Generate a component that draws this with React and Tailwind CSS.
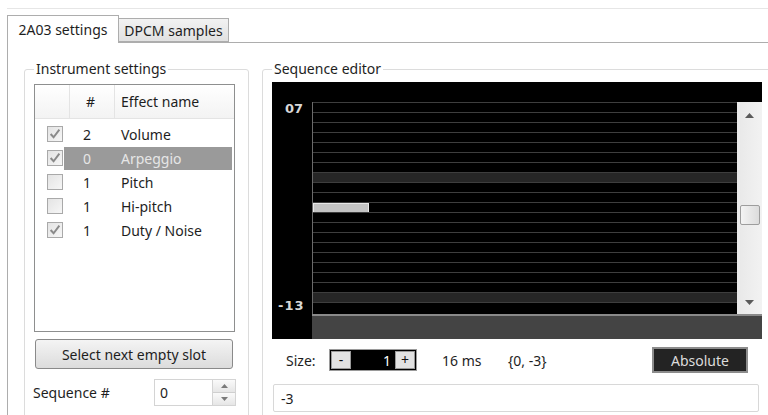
import React from 'react';

const effects = [
  { checked: true, index: 2, name: 'Volume' },
  { checked: true, index: 0, name: 'Arpeggio', selected: true },
  { checked: false, index: 1, name: 'Pitch' },
  { checked: false, index: 1, name: 'Hi-pitch' },
  { checked: true, index: 1, name: 'Duty / Noise' }
];

// arpeggio range 7 .. -13, one row per value
const rows = Array.from({ length: 21 }, (_, i) => 7 - i);

function CheckBox({ checked }) {
  return <div className="w-[16px] h-[16px] border border-[#a9a9a9] bg-gradient-to-br from-[#e4e4e4] to-[#f6f6f6] flex items-center justify-center">
      {checked && <svg width="12" height="12" viewBox="0 0 11 11">
          <path d="M1.5 5.5 L4.2 8.5 L9.5 1.5" fill="none" stroke="#8a8a8a" strokeWidth="1.8" />
        </svg>}
    </div>;
}

function GroupBox({ title, className, children }) {
  return <fieldset className={`shrink-0 border border-[#dcdcdc] rounded-[3px] ${className}`}>
      <legend className="px-[2px] text-[14px] leading-[18px] text-[#1e1e1e]">{title}</legend>
      {children}
    </fieldset>;
}

function EffectList() {
  return <div className="w-[201px] h-[248px] border border-[#8e8f8f] bg-white">
      <div className="flex h-[34px] border-b border-[#e4e4e4] bg-gradient-to-b from-[#ffffff] to-[#f3f3f3] text-[14px] text-[#1e1e1e]">
        <div className="w-[35px] border-r border-[#e4e4e4]" />
        <div className="w-[45px] border-r border-[#e4e4e4] flex items-center pl-[16px]">#</div>
        <div className="flex-1 flex items-center pl-[6px]">Effect name</div>
      </div>
      <div className="pt-[3px]">
        {effects.map(fx => <div key={fx.name} className="flex items-center h-[24px] text-[14px]">
            <div className="w-[29px] flex justify-end pr-[1px]">
              <CheckBox checked={fx.checked} />
            </div>
            <div className={`flex-1 mr-[2px] h-[23px] flex items-center ${fx.selected ? 'bg-[#9a9a9a] text-[#e6e6e6]' : 'text-[#1e1e1e]'}`}>
              <span className="w-[57px] pl-[19px]">{fx.index}</span>
              <span>{fx.name}</span>
            </div>
          </div>)}
      </div>
    </div>;
}

function ScrollBar() {
  return <div className="w-[25px] bg-gradient-to-r from-[#e8e8e8] to-[#f2f2f2] flex flex-col items-center pt-[11px] pb-[9px]">
      <svg width="9" height="5" viewBox="0 0 9 5"><path d="M0 5 L4.5 0 L9 5 Z" fill="#5a5a5a" /></svg>
      <div className="mt-[87px] w-[20px] h-[20px] border border-[#9d9d9d] rounded-[2px] bg-gradient-to-r from-[#f4f4f4] to-[#dcdcdc]" />
      <svg className="mt-auto" width="9" height="5" viewBox="0 0 9 5"><path d="M0 0 L9 0 L4.5 5 Z" fill="#5a5a5a" /></svg>
    </div>;
}

function SequenceGraph() {
  return <div className="w-[490px] h-[257px] bg-black flex">
      <div className="w-[40px] flex flex-col justify-between pt-[19px] pb-[25px] text-[13px] font-bold leading-[16px] text-[#d8d8d8] [font-family:'DejaVu_Sans',sans-serif]">
        <span className="pl-[13px]">07</span>
        <span className="pl-[6px] tracking-[1px]">-13</span>
      </div>
      <div className="flex-1 flex flex-col">
        <div className="h-[20px]" />
        <div className="h-[212px] flex">
          <div className="flex-1 border-l border-[#6a6a6a] flex flex-col">
            {rows.map(v => <div key={v} className={`border-t border-[#3e3e3e] relative ${v === -13 ? 'flex-1' : 'h-[10px]'} ${v === 0 || v === -12 ? 'bg-[#262626]' : ''}`}>
                {v === -3 && <div className="absolute left-0 top-0 w-[56px] h-[10px] bg-[#c4c4c4] border border-[#e8e8e8]" />}
              </div>)}
          </div>
          <ScrollBar />
        </div>
        <div className="flex-1 border-t-2 border-[#8a8a8a] bg-[#444444]" />
      </div>
    </div>;
}

export default function App() {
  return <div className="w-[768px] h-[415px] bg-white overflow-hidden [font-family:'Noto_Sans',sans-serif] text-[#1e1e1e]">
      <div className="ml-[7px] mt-[8px] border-t border-[#e6e6e6] pt-[6px]">
        {/* tab strip */}
        <div className="flex items-end h-[27px]">
          <div className="relative z-10 w-[112px] h-[28px] -mb-px border border-b-0 border-[#adadad] bg-white flex items-center justify-center text-[14px]">
            2A03 settings
          </div>
          <div className="w-[110px] h-[24px] border border-l-0 border-[#adadad] bg-gradient-to-b from-[#f2f2f2] to-[#e1e1e1] flex items-center justify-center text-[14px]">
            DPCM samples
          </div>
        </div>

        {/* tab page */}
        <div className="h-[380px] border-l border-t border-[#adadad] bg-white flex pt-[17px]">
          <GroupBox title="Instrument settings" className="ml-[16px] w-[225px] h-[400px] pl-[9px] pt-[6px]">
            <EffectList />
            <button className="mt-[7px] ml-[1px] w-[198px] h-[30px] border border-[#8a8a8a] rounded-[3px] bg-gradient-to-b from-[#f4f4f4] to-[#dcdcdc] text-[14px] text-[#1e1e1e]">
              Select next empty slot
            </button>
            <div className="mt-[10px] flex items-center text-[14px]">
              <span className="w-[121px] -ml-[1px]">Sequence #</span>
              <div className="w-[82px] h-[27px] border border-[#d4d4d4] flex">
                <span className="flex-1 pl-[5px] leading-[25px]">0</span>
                <div className="w-[23px] flex flex-col border-l border-[#d4d4d4]">
                  <div className="flex-1 flex items-center justify-center bg-gradient-to-b from-[#fafafa] to-[#e6e6e6] border-b border-[#cfcfcf]">
                    <svg width="7" height="4" viewBox="0 0 7 4"><path d="M0 4 L3.5 0 L7 4 Z" fill="#7a7a7a" /></svg>
                  </div>
                  <div className="flex-1 flex items-center justify-center bg-gradient-to-b from-[#fafafa] to-[#e6e6e6]">
                    <svg width="7" height="4" viewBox="0 0 7 4"><path d="M0 0 L7 0 L3.5 4 Z" fill="#7a7a7a" /></svg>
                  </div>
                </div>
              </div>
            </div>
          </GroupBox>

          <GroupBox title="Sequence editor" className="ml-[13px] w-[520px] h-[400px] pl-[9px] pt-[4px]">
            <SequenceGraph />
            <div className="w-[490px] flex items-center h-[30px] mt-[6px] text-[14px]">
              <span className="ml-[14px] w-[43px]">Size:</span>
              <div className="w-[88px] h-[22px] bg-black border border-[#9a9a9a] flex items-center px-[1px]">
                <div className="w-[20px] h-[18px] bg-[#e2e2e2] border border-[#999] flex items-center justify-center leading-none text-[#111]">-</div>
                <span className="flex-1 text-right pr-[4px] text-white">1</span>
                <div className="w-[20px] h-[18px] bg-[#e2e2e2] border border-[#999] flex items-center justify-center leading-none text-[#111]">+</div>
              </div>
              <span className="ml-[25px] w-[66px]">16 ms</span>
              <span>{'{0, -3}'}</span>
              <button className="ml-auto mr-[14px] w-[96px] h-[26px] bg-[#232323] border-2 border-[#8c8c8c] text-[#dcdcdc] text-[14px]">
                Absolute
              </button>
            </div>
            <div className="mt-[9px] ml-[1px] w-[486px] h-[28px] border border-[#d8d8d8] rounded-[2px] pl-[7px] flex items-center text-[14px]">
              -3
            </div>
          </GroupBox>
        </div>
      </div>
    </div>;
}
